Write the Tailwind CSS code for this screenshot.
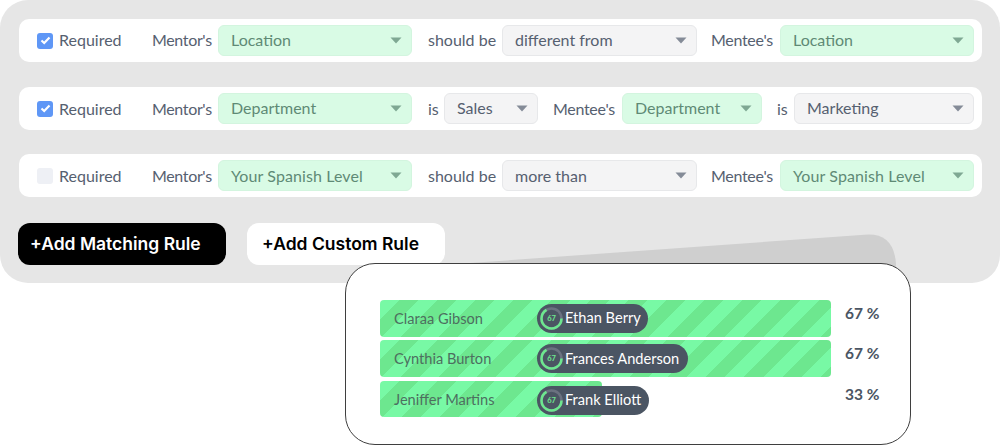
<!doctype html>
<html lang="en">
<head>
	<meta charset="utf-8">
	<title>Matching rules</title>
	<script src="https://cdn.jsdelivr.net/npm/@tailwindcss/browser@4"></script>
</head>
<body>
	<div class="relative w-[1000px] h-[446px] overflow-hidden bg-white font-['Lato','Noto_Sans',sans-serif] text-[16px] text-[#566070]">

		<!-- grey panel with the three rules -->
		<div class="w-[1000px] h-[283px] rounded-[28px] bg-[#e6e6e6] pt-[19px] pl-[19px]">

			<div class="w-[963px] h-[43px] rounded-[10px] bg-white flex items-center pl-[18px]">
				<span class="w-[16px] h-[16px] rounded-[3px] bg-[#5f97f6] flex items-center justify-center"><svg width="11" height="9" viewBox="0 0 11 9" fill="none"><path d="M1.5 4.5L4.2 7L9.5 1.6" stroke="#fff" stroke-width="2.2"/></svg></span>
				<span class="ml-[6px] w-[93px] pb-[2px]">Required</span>
				<span class="w-[66px] pb-[2px] tracking-[-0.35px]">Mentor's</span>
				<div class="w-[194px] h-[31px] rounded-[6px] border border-[#d3f5df] bg-[#d9fbe5] flex items-center justify-between pl-[12px] pr-[9px] pb-[2px] text-[#5f8a75]">Location<svg class="mt-[2px]" width="12" height="7" viewBox="0 0 12 7"><path d="M0.5 0.5H11.5L6 6.5Z" fill="#7fa893"/></svg></div>
				<span class="ml-[16px] w-[74px] pb-[2px]">should be</span>
				<div class="w-[195px] h-[31px] rounded-[6px] border border-[#e7e8ea] bg-[#f4f4f5] flex items-center justify-between pl-[12px] pr-[9px] pb-[2px]">different from<svg class="mt-[2px]" width="12" height="7" viewBox="0 0 12 7"><path d="M0.5 0.5H11.5L6 6.5Z" fill="#848b97"/></svg></div>
				<span class="ml-[14px] w-[69px] pb-[2px] tracking-[-0.3px]">Mentee's</span>
				<div class="w-[194px] h-[31px] rounded-[6px] border border-[#d3f5df] bg-[#d9fbe5] flex items-center justify-between pl-[12px] pr-[9px] pb-[2px] text-[#5f8a75]">Location<svg class="mt-[2px]" width="12" height="7" viewBox="0 0 12 7"><path d="M0.5 0.5H11.5L6 6.5Z" fill="#7fa893"/></svg></div>
			</div>

			<div class="mt-[25px] w-[963px] h-[43px] rounded-[10px] bg-white flex items-center pl-[18px]">
				<span class="w-[16px] h-[16px] rounded-[3px] bg-[#5f97f6] flex items-center justify-center"><svg width="11" height="9" viewBox="0 0 11 9" fill="none"><path d="M1.5 4.5L4.2 7L9.5 1.6" stroke="#fff" stroke-width="2.2"/></svg></span>
				<span class="ml-[6px] w-[93px]">Required</span>
				<span class="w-[66px] tracking-[-0.35px]">Mentor's</span>
				<div class="w-[194px] h-[31px] rounded-[6px] border border-[#d3f5df] bg-[#d9fbe5] flex items-center justify-between pl-[12px] pr-[9px] pb-[1px] text-[#5f8a75]">Department<svg class="mt-[1px]" width="12" height="7" viewBox="0 0 12 7"><path d="M0.5 0.5H11.5L6 6.5Z" fill="#7fa893"/></svg></div>
				<span class="ml-[16px] w-[16px]">is</span>
				<div class="w-[94px] h-[31px] rounded-[6px] border border-[#e7e8ea] bg-[#f4f4f5] flex items-center justify-between pl-[12px] pr-[9px] pb-[1px]">Sales<svg class="mt-[1px]" width="12" height="7" viewBox="0 0 12 7"><path d="M0.5 0.5H11.5L6 6.5Z" fill="#848b97"/></svg></div>
				<span class="ml-[15px] w-[69px] tracking-[-0.3px]">Mentee's</span>
				<div class="w-[140px] h-[31px] rounded-[6px] border border-[#d3f5df] bg-[#d9fbe5] flex items-center justify-between pl-[12px] pr-[9px] pb-[1px] text-[#5f8a75]">Department<svg class="mt-[1px]" width="12" height="7" viewBox="0 0 12 7"><path d="M0.5 0.5H11.5L6 6.5Z" fill="#7fa893"/></svg></div>
				<span class="ml-[15px] w-[17px]">is</span>
				<div class="w-[180px] h-[31px] rounded-[6px] border border-[#e7e8ea] bg-[#f4f4f5] flex items-center justify-between pl-[12px] pr-[9px] pb-[1px]">Marketing<svg class="mt-[1px]" width="12" height="7" viewBox="0 0 12 7"><path d="M0.5 0.5H11.5L6 6.5Z" fill="#848b97"/></svg></div>
			</div>

			<div class="mt-[24px] w-[963px] h-[43px] rounded-[10px] bg-white flex items-center pl-[18px]">
				<span class="w-[16px] h-[16px] rounded-[3px] bg-[#eef0f5]"></span>
				<span class="ml-[6px] w-[93px]">Required</span>
				<span class="w-[66px] tracking-[-0.35px]">Mentor's</span>
				<div class="w-[194px] h-[31px] rounded-[6px] border border-[#d3f5df] bg-[#d9fbe5] flex items-center justify-between pl-[12px] pr-[9px] text-[#5f8a75] tracking-[0.1px]">Your Spanish Level<svg width="12" height="7" viewBox="0 0 12 7"><path d="M0.5 0.5H11.5L6 6.5Z" fill="#7fa893"/></svg></div>
				<span class="ml-[16px] w-[74px]">should be</span>
				<div class="w-[195px] h-[31px] rounded-[6px] border border-[#e7e8ea] bg-[#f4f4f5] flex items-center justify-between pl-[12px] pr-[9px]">more than<svg width="12" height="7" viewBox="0 0 12 7"><path d="M0.5 0.5H11.5L6 6.5Z" fill="#848b97"/></svg></div>
				<span class="ml-[14px] w-[69px] tracking-[-0.3px]">Mentee's</span>
				<div class="w-[194px] h-[31px] rounded-[6px] border border-[#d3f5df] bg-[#d9fbe5] flex items-center justify-between pl-[12px] pr-[9px] text-[#5f8a75] tracking-[0.1px]">Your Spanish Level<svg width="12" height="7" viewBox="0 0 12 7"><path d="M0.5 0.5H11.5L6 6.5Z" fill="#7fa893"/></svg></div>
			</div>

			<div class="mt-[26px] -ml-[1px] flex gap-[21px] font-['Inter',sans-serif] font-semibold text-[17.5px]">
				<button class="w-[208px] h-[42px] rounded-[12px] bg-black text-white text-left pl-[12px] pt-[1px]">+Add Matching Rule</button>
				<button class="w-[198px] h-[42px] rounded-[12px] bg-white text-black text-left pl-[15px] pt-[1px]">+Add Custom Rule</button>
			</div>
		</div>

		<!-- shadow wedge behind the card -->
		<svg class="absolute left-[470px] top-[230px]" width="430" height="40" viewBox="0 0 430 40"><path d="M0 33L398 4.5Q424 4 426 34V40H0Z" fill="#cfcfcf"/></svg>

		<!-- floating results card -->
		<div class="absolute left-[345px] top-[263px] w-[566px] h-[182px] rounded-[30px] border border-[#3f3f3f] bg-white pl-[34px] pt-[35.5px]">

			<div class="flex items-start h-[40.75px]">
				<div class="relative w-[451px] h-[37px] rounded-[4px] bg-[repeating-linear-gradient(135deg,#78f9a5_0px,#78f9a5_13.5px,#6de78f_13.5px,#6de78f_27px)] flex items-center pl-[14px] pt-[1px] text-[14.6px] text-[#4d6f60]">Claraa Gibson
					<div class="absolute left-[157px] top-[4px] h-[29px] w-[111px] rounded-full bg-[#4b5563] flex items-center pl-[2px] text-white">
						<svg width="25" height="25" viewBox="0 0 25 25"><circle cx="12.5" cy="12.5" r="10" fill="none" stroke="#6b7280" stroke-width="2.5"/><path d="M22.5 12.5A10 10 0 1 1 7.5 3.8" fill="none" stroke="#6de78f" stroke-width="2.5"/><text x="12.5" y="15" text-anchor="middle" font-size="7.5" font-weight="700" fill="#6de78f">67</text></svg>
						<span class="ml-[1px]">Ethan Berry</span>
					</div>
				</div>
				<span class="ml-[14px] mt-[2px] font-bold text-[15.5px] text-[#4b5563]">67 %</span>
			</div>

			<div class="flex items-start h-[40.75px]">
				<div class="relative w-[451px] h-[36.5px] rounded-[4px] bg-[repeating-linear-gradient(135deg,#78f9a5_0px,#78f9a5_13.5px,#6de78f_13.5px,#6de78f_27px)] flex items-center pl-[14px] pt-[1px] text-[14.6px] text-[#4d6f60]">Cynthia Burton
					<div class="absolute left-[157px] top-[4px] h-[29px] w-[151px] rounded-full bg-[#4b5563] flex items-center pl-[2px] text-white">
						<svg width="25" height="25" viewBox="0 0 25 25"><circle cx="12.5" cy="12.5" r="10" fill="none" stroke="#6b7280" stroke-width="2.5"/><path d="M22.5 12.5A10 10 0 1 1 7.5 3.8" fill="none" stroke="#6de78f" stroke-width="2.5"/><text x="12.5" y="15" text-anchor="middle" font-size="7.5" font-weight="700" fill="#6de78f">67</text></svg>
						<span class="ml-[1px]">Frances Anderson</span>
					</div>
				</div>
				<span class="ml-[14px] mt-[2px] font-bold text-[15.5px] text-[#4b5563]">67 %</span>
			</div>

			<div class="flex items-start h-[40.75px]">
				<div class="w-[451px] relative">
					<div class="relative w-[222px] h-[36px] rounded-[4px] bg-[repeating-linear-gradient(135deg,#78f9a5_0px,#78f9a5_13.5px,#6de78f_13.5px,#6de78f_27px)] flex items-center pl-[14px] pt-[1px] text-[14.6px] text-[#4d6f60]">Jeniffer Martins
						<div class="absolute left-[157px] top-[4.5px] h-[29px] w-[112px] rounded-full bg-[#4b5563] flex items-center pl-[2px] text-white">
							<svg width="25" height="25" viewBox="0 0 25 25"><circle cx="12.5" cy="12.5" r="10" fill="none" stroke="#6b7280" stroke-width="2.5"/><path d="M22.5 12.5A10 10 0 1 1 7.5 3.8" fill="none" stroke="#6de78f" stroke-width="2.5"/><text x="12.5" y="15" text-anchor="middle" font-size="7.5" font-weight="700" fill="#6de78f">67</text></svg>
							<span class="ml-[1px]">Frank Elliott</span>
						</div>
					</div>
				</div>
				<span class="ml-[14px] mt-[2px] font-bold text-[15.5px] text-[#4b5563]">33 %</span>
			</div>
		</div>
	</div>
</body>
</html>
